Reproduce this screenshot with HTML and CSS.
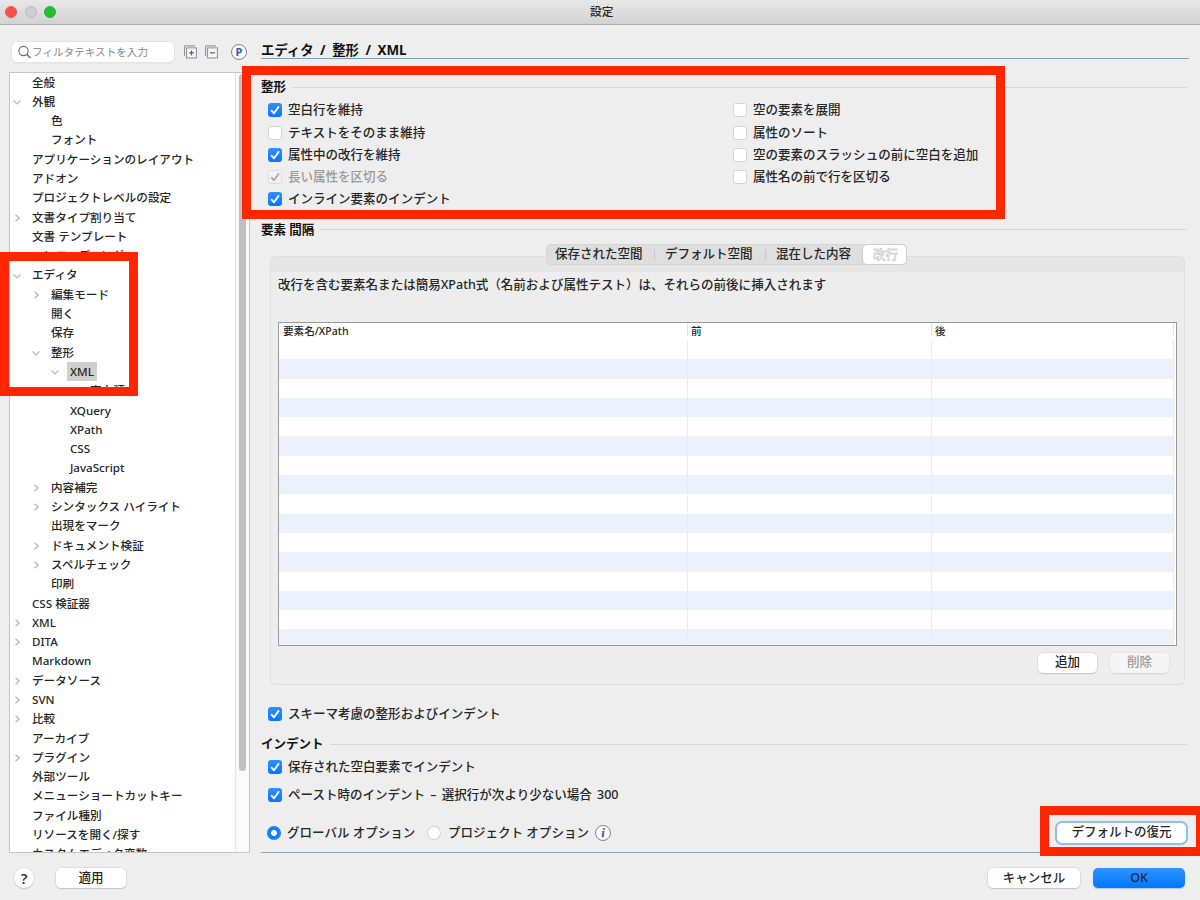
FILE: index.html
```
<!DOCTYPE html>
<html lang="ja">
<head>
<meta charset="utf-8">
<title>設定</title>
<link rel="stylesheet" href="styles.css">
</head>
<body>
<svg class="defs" width="0" height="0" aria-hidden="true">
  <symbol id="right" viewBox="0 0 8 8"><path d="M2.5 .7 6.2 4 2.5 7.3" fill="none" stroke="#b4b4b4" stroke-width="1.2"/></symbol>
  <symbol id="down" viewBox="0 0 8 8"><path d="M.5 2.3 4 5.8 7.5 2.3" fill="none" stroke="#b4b4b4" stroke-width="1.2"/></symbol>
  <symbol id="tick" viewBox="0 0 14 14"><path d="M3.6 7.6 6 10.3 10.6 3.9" fill="none" stroke="currentColor" stroke-width="1.8" stroke-linecap="round" stroke-linejoin="round"/></symbol>
</svg>
<div class="window">
  <header class="titlebar">
    <div class="lights"><i class="red"></i><i class="gray"></i><i class="green"></i></div>
    <span class="title">設定</span>
  </header>
  <main class="body">
    <aside class="sidebar">
      <div class="tools">
        <div class="search">
          <svg width="14" height="14" viewBox="0 0 14 14"><circle cx="5.5" cy="6" r="4.6" fill="none" stroke="#666" stroke-width="1.1"/><path d="m8.8 9.3 3.6 3.7" stroke="#666" stroke-width="1.3"/></svg>
          <span>フィルタテキストを入力</span>
        </div>
        <svg class="fold" width="13" height="14" viewBox="0 0 13 14"><path d="M.6 11V.9H11" fill="none" stroke="#8a8a8a"/><rect x="2.6" y="2.9" width="9.8" height="10" fill="#fafafa" stroke="#8a8a8a"/><path d="M5 7.9h5M7.5 5.4v5" stroke="#1c6fae" stroke-width="1.2"/></svg>
        <svg class="fold2" width="13" height="14" viewBox="0 0 13 14"><path d="M.6 11V.9H11" fill="none" stroke="#8a8a8a"/><rect x="2.6" y="2.9" width="9.8" height="10" fill="#fafafa" stroke="#8a8a8a"/><path d="M5 7.9h5" stroke="#1c6fae" stroke-width="1.2"/></svg>
        <span class="project">P</span>
      </div>
      <div class="treebox">
        <ul class="tree">
          <li>全般</li>
          <li><svg><use href="#down"/></svg>外観</li>
          <li class="l2">色</li>
          <li class="l2">フォント</li>
          <li>アプリケーションのレイアウト</li>
          <li>アドオン</li>
          <li>プロジェクトレベルの設定</li>
          <li><svg><use href="#right"/></svg>文書タイプ割り当て</li>
          <li>文書 テンプレート</li>
          <li>エンコーディング</li>
          <li><svg><use href="#down"/></svg>エディタ</li>
          <li class="l2"><svg><use href="#right"/></svg>編集モード</li>
          <li class="l2">開く</li>
          <li class="l2">保存</li>
          <li class="l2"><svg><use href="#down"/></svg>整形</li>
          <li class="l3"><svg><use href="#down"/></svg><span class="selected">XML</span></li>
          <li class="l4">空白類</li>
          <li class="l3">XQuery</li>
          <li class="l3">XPath</li>
          <li class="l3">CSS</li>
          <li class="l3">JavaScript</li>
          <li class="l2"><svg><use href="#right"/></svg>内容補完</li>
          <li class="l2"><svg><use href="#right"/></svg>シンタックス ハイライト</li>
          <li class="l2">出現をマーク</li>
          <li class="l2"><svg><use href="#right"/></svg>ドキュメント検証</li>
          <li class="l2"><svg><use href="#right"/></svg>スペルチェック</li>
          <li class="l2">印刷</li>
          <li>CSS 検証器</li>
          <li><svg><use href="#right"/></svg>XML</li>
          <li><svg><use href="#right"/></svg>DITA</li>
          <li>Markdown</li>
          <li><svg><use href="#right"/></svg>データソース</li>
          <li><svg><use href="#right"/></svg>SVN</li>
          <li><svg><use href="#right"/></svg>比較</li>
          <li>アーカイブ</li>
          <li><svg><use href="#right"/></svg>プラグイン</li>
          <li>外部ツール</li>
          <li>メニューショートカットキー</li>
          <li>ファイル種別</li>
          <li>リソースを開く/探す</li>
          <li>カスタムエディタ変数</li>
        </ul>
        <div class="track"><div class="thumb"></div></div>
      </div>
    </aside>
    <section class="content">
      <h1>エディタ / 整形 / XML</h1>
      <h2 class="h-format"><span>整形</span></h2>
      <div class="options">
        <div class="col">
          <label><i class="box on"><svg><use href="#tick"/></svg></i>空白行を維持</label>
          <label><i class="box"></i>テキストをそのまま維持</label>
          <label><i class="box on"><svg><use href="#tick"/></svg></i>属性中の改行を維持</label>
          <label class="disabled"><i class="box"><svg><use href="#tick"/></svg></i>長い属性を区切る</label>
          <label><i class="box on"><svg><use href="#tick"/></svg></i>インライン要素のインデント</label>
        </div>
        <div class="col">
          <label><i class="box"></i>空の要素を展開</label>
          <label><i class="box"></i>属性のソート</label>
          <label><i class="box"></i>空の要素のスラッシュの前に空白を追加</label>
          <label><i class="box"></i>属性名の前で行を区切る</label>
        </div>
      </div>
      <h2 class="h-space"><span>要素 間隔</span></h2>
      <div class="tabs">
        <span class="t1">保存された空間</span><span class="t2">デフォルト空間</span><span class="t3">混在した内容</span><span class="active">改行</span>
      </div>
      <div class="panel">
        <p>改行を含む要素名または簡易XPath式（名前および属性テスト）は、それらの前後に挿入されます</p>
        <div class="table">
          <div class="thead"><span>要素名/XPath</span><span>前</span><span>後</span></div>
          <div class="rows"><span></span><span></span><span></span></div>
        </div>
        <div class="actions"><button>追加</button><button class="off">削除</button></div>
      </div>
      <label class="schema"><i class="box on"><svg><use href="#tick"/></svg></i>スキーマ考慮の整形およびインデント</label>
      <h2 class="h-indent"><span>インデント</span></h2>
      <label class="keep"><i class="box on"><svg><use href="#tick"/></svg></i>保存された空白要素でインデント</label>
      <label class="paste"><i class="box on"><svg><use href="#tick"/></svg></i>ペースト時のインデント – 選択行が次より少ない場合 300</label>
      <div class="scope">
        <i class="radio on"></i><span class="global">グローバル オプション</span>
        <i class="radio"></i><span class="proj">プロジェクト オプション</span>
        <span class="info">i</span>
        <button class="restore">デフォルトの復元</button>
      </div>
    </section>
  </main>
  <footer class="footer">
    <button class="help">?</button>
    <button class="apply">適用</button>
    <button class="cancel">キャンセル</button>
    <button class="ok">OK</button>
  </footer>
  <div class="mark mark-format"></div>
  <div class="mark mark-tree"></div>
  <div class="mark mark-restore"></div>
</div>
</body>
</html>
```
FILE: styles.css
```
* { box-sizing: border-box; }
body {
  margin: 0;
  font: 500 12.53px/20px "Noto Sans", "Noto Sans CJK JP", sans-serif;
  color: #262626;
}
.defs { position: absolute; }
i { font-style: normal; }
h1, h2, p, ul { margin: 0; padding: 0; }
.window {
  position: relative;
  width: 1200px;
  height: 900px;
  overflow: hidden;
  display: flex;
  flex-direction: column;
  background: #eee;
  white-space: nowrap;
}
.titlebar {
  display: flex;
  align-items: center;
  height: 25px;
  flex: none;
  background: linear-gradient(#e8e8e8, #d2d2d2);
  border-bottom: 1px solid #adadad;
}
.lights { display: flex; gap: 7.5px; width: 590px; padding-left: 5px; flex: none; }
.lights i { width: 12px; height: 12px; border-radius: 50%; border: 1px solid; }
.lights .red { background: #ff5148; border-color: #e8524b; }
.lights .gray { background: #cecece; border-color: #bcbcbc; }
.lights .green { background: #20c131; border-color: #2bb038; }
.title { font-size: 11.7px; line-height: 22px; padding-bottom: 2px; }

.body { display: flex; height: 828px; flex: none; }
.sidebar { width: 241px; margin-left: 9px; flex: none; }
.tools { display: flex; align-items: center; height: 47px; padding: 7px 0 0 3px; }
.search {
  display: flex;
  align-items: center;
  width: 162px;
  height: 20px;
  padding-left: 6px;
  border-radius: 5px;
  background: #fff;
  box-shadow: 0 0 0 1px #e4e4e4, 0 1px 1px #c4c4c4;
  color: #888;
  font-size: 10.6px;
  font-weight: 400;
}
.fold { margin-left: 10px; }
.fold2 { margin-left: 8px; }
.project {
  width: 16px;
  height: 16px;
  margin-left: 13px;
  border: 1px solid #858585;
  border-radius: 50%;
  background: #fafafa;
  color: #1668b0;
  font: bold 11px/14px "Noto Sans", sans-serif;
  text-align: center;
}
.treebox {
  display: flex;
  height: 781px;
  border: 1px solid #c6c6c6;
  background: #fff;
  overflow: hidden;
}
.tree { flex: 1; list-style: none; font-size: 11.6px; margin-top: -.5px; }
.tree li {
  display: flex;
  align-items: center;
  position: relative;
  height: 19.31px;
  line-height: 19.31px;
  padding-left: 22px;
}
.tree .l2 { padding-left: 41px; }
.tree .l3 { padding-left: 60px; }
.tree .l4 { padding-left: 80px; }
.tree svg { width: 8px; height: 8px; margin: 1px 11px 0 -19px; flex: none; }
.selected { background: #d0d0d0; padding: 0 3px; margin-left: -3px; height: 19px; }
.track {
  width: 14px;
  border-left: 1px solid #e6e6e6;
  background: #fafafa;
  padding: 1px 0 0 3px;
}
.thumb { width: 7px; height: 697px; border-radius: 4px; background: #c1c1c1; }

.content { width: 928px; margin-left: 11px; display: flex; flex-direction: column; }
h1 {
  height: 34px;
  padding-top: 14px;
  border-bottom: 1px solid #7da2c4;
  font-size: 13.4px;
  line-height: 22px;
  font-weight: 700;
  word-spacing: 3px;
  color: #111;
}
h2 { display: flex; align-items: center; gap: 6px; width: 926px; font-size: 12.53px; line-height: 20px; height: 20px; flex: none; color: #111; }
h2::after { content: ""; flex: 1; height: 1px; background: #d6d6d6; }
.h-format { margin-top: 18px; }
.options { display: flex; margin-top: 2.3px; padding-left: 7px; height: 110.7px; }
.col:first-child { width: 465px; flex: none; }
label { display: flex; align-items: center; gap: 6px; height: 22.2px; flex: none; }
.box {
  width: 14px;
  height: 14px;
  border-radius: 3px;
  background: #fff;
  box-shadow: inset 0 0 0 1px #d4d4d4;
  flex: none;
}
.box svg { display: block; width: 14px; height: 14px; color: #fff; }
.box.on { background: linear-gradient(#2f8fff, #0878fb); box-shadow: none; }
.disabled { color: #999; }
.disabled .box { background: #f3f3f3; box-shadow: inset 0 0 0 1px #dedede; }
.disabled .box svg { color: #aaa; }
.h-space { margin-top: 10px; }
.tabs {
  display: flex;
  position: relative;
  z-index: 1;
  margin: 4px 0 0 285px;
  width: 361px;
  height: 21px;
  border-radius: 5px;
  background: #dedede;
  box-shadow: inset 0 0 0 1px #d6d6d6;
  flex: none;
}
.tabs span { line-height: 20px; padding-left: 9px; position: relative; }
.t1 { width: 110px; }
.t2 { width: 111px; }
.t3 { width: 95px; }
.t2::before, .t3::before { content: ""; position: absolute; left: -2px; top: 5px; width: 1px; height: 11px; background: #c8c8c8; }
.tabs .active {
  width: 45px;
  height: 21px;
  padding-left: 10px;
  border-radius: 5px;
  background: #fff;
  border: 1px solid #cdcdcd;
  color: #fff;
  -webkit-text-stroke: .5px #b5b5b5;
}
.panel {
  margin: -9px 0 0 9px;
  width: 915px;
  height: 429px;
  padding: 18px 0 0 7px;
  border: 1px solid #dfdfdf;
  border-radius: 5px;
  background: linear-gradient(#e6e6e6 15px, #ededed 15px);
  flex: none;
}
.table { width: 899px; height: 324px; margin-top: 27px; border: 1px solid #999; background: #fff; padding-right: 2px; }
.thead, .rows { display: grid; grid-template-columns: 409px 244px 1fr; }
.thead { height: 17px; font-size: 10.6px; line-height: 16px; }
.thead span { padding-left: 4px; border-right: 1px solid #e2e2e2; height: 13px; }
.thead span + span { padding-left: 3px; }
.rows { height: 305px; background: repeating-linear-gradient(#fff 0 19.3px, #ebf2fe 19.3px 38.6px); }
.rows span { border-right: 1px solid #ebebef; }
.actions { display: flex; justify-content: flex-end; gap: 13px; padding: 7px 15px 0 0; }
button {
  display: block;
  height: 20px;
  padding: 0;
  border: 0;
  border-radius: 5px;
  background: #fff;
  box-shadow: 0 0 0 .5px #d0d0d0, 0 1px 1px #bbb;
  color: inherit;
  font: inherit;
  line-height: 17px;
}
.actions button { width: 59px; padding-bottom: 2px; }
.actions .off { color: #999; background: #f5f5f5; box-shadow: 0 0 0 .5px #ddd, 0 1px 1px #ccc; }
.schema { margin: 18px 0 0 7px; }
.h-indent { margin-top: 9px; }
.keep { margin: 2px 0 0 7px; }
.paste { margin: 6px 0 0 7px; word-spacing: 2px; }
.scope { display: flex; align-items: center; height: 46px; padding: 7px 3px 0 6px; border-bottom: 1px solid #8fa8bc; flex: none; }
.radio { width: 14px; height: 14px; border-radius: 50%; background: #fff; box-shadow: inset 0 0 0 1px #d2d2d2; }
.radio.on { background: radial-gradient(circle, #fff 2.6px, #147fff 3.2px); box-shadow: none; }
.global { width: 140px; margin-left: 6px; }
.proj { width: 141px; margin-left: 7px; }
.info {
  width: 16px;
  height: 16px;
  margin-left: 6px;
  border: 1px solid #858585;
  border-radius: 50%;
  background: #fafafa;
  color: #2e57ac;
  text-align: center;
  font: italic bold 13px/13px "Liberation Serif", serif;
}
.restore { width: 129px; margin-left: auto; padding-bottom: 2px; box-shadow: 0 0 0 2px #91bdf0; }

.footer { display: flex; align-items: center; padding: 2px 15px 0 14px; height: 47px; }
.footer button { padding-bottom: 1px; }
.help { width: 20px; border-radius: 50%; font-size: 15px; line-height: 20px; }
.apply { width: 70px; margin-left: 22px; }
.cancel { width: 92px; margin-left: auto; }
.ok { width: 92px; margin-left: 13px; background: linear-gradient(#2f92ff, #0078ff); box-shadow: 0 1px 1px #b4c4dc; }

.mark { position: absolute; border: 9.5px solid #ff2600; z-index: 2; }
.mark-format { left: 242px; top: 66px; width: 763px; height: 153px; }
.mark-tree { left: 0; top: 252px; width: 138px; height: 144px; }
.mark-restore { left: 1040px; top: 806px; width: 165px; height: 50px; }
```
